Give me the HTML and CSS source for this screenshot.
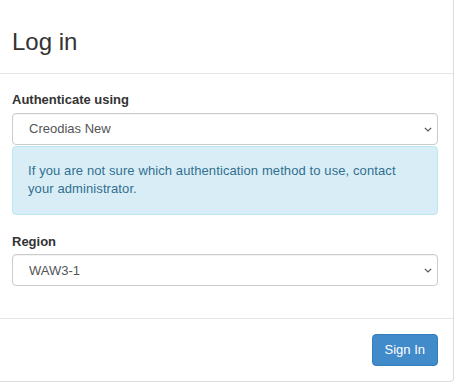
FILE: index.html
```html
<!DOCTYPE html>
<html>
<head>
<meta charset="utf-8">
<link rel="stylesheet" href="styles.css">
</head>
<body>
<div class="panel">
  <div class="panel-header">
    <h3 class="title">Log in</h3>
  </div>
  <div class="panel-body">
    <div class="form-group">
      <label class="label">Authenticate using</label>
      <div class="select-wrap">
        <select class="select"><option>Creodias New</option></select>
        <svg class="chev" width="8" height="5" viewBox="0 0 8 5"><path d="M0.8 0.8 L4 4 L7.2 0.8" fill="none" stroke="#555" stroke-width="1.2"/></svg>
      </div>
      <div class="alert">If you are not sure which authentication method to use, contact your administrator.</div>
    </div>
    <div class="form-group">
      <label class="label">Region</label>
      <div class="select-wrap">
        <select class="select"><option>WAW3-1</option></select>
        <svg class="chev" width="8" height="5" viewBox="0 0 8 5"><path d="M0.8 0.8 L4 4 L7.2 0.8" fill="none" stroke="#555" stroke-width="1.2"/></svg>
      </div>
    </div>
  </div>
  <div class="panel-footer">
    <button class="btn">Sign In</button>
  </div>
</div>
</body>
</html>
```
FILE: styles.css
```css
* { box-sizing: border-box; }
html, body { margin: 0; padding: 0; background: #fff; }
body {
  font-family: "Liberation Sans", Arial, sans-serif;
  font-size: 13px;
  line-height: 1.428571;
  color: #333;
}
.panel {
  width: 454px;
  height: 382px;
  border-right: 1px solid #ddd;
  border-bottom: 1px solid #ddd;
  border-bottom-right-radius: 4px;
  display: flex;
  flex-direction: column;
}
.panel-header {
  height: 74px;
  padding: 29px 15px 0 12px;
  border-bottom: 1px solid #e5e5e5;
}
.title {
  margin: 0;
  font-size: 24px;
  font-weight: 500;
  line-height: 1.1;
  color: #333;
}
.panel-body {
  padding: 17px 15px 0 12px;
  height: 245px;
  border-bottom: 1px solid #e5e5e5;
}
.form-group { margin-bottom: 18px; }
.label {
  display: block;
  font-weight: bold;
  margin-bottom: 3px;
}
.select-wrap { position: relative; }
.select {
  display: block;
  width: 100%;
  height: 32px;
  appearance: none;
  -webkit-appearance: none;
  background: #fff;
  border: 1px solid #ccc;
  border-radius: 4px;
  padding: 0 24px 0 16px;
  font-family: "Liberation Sans", Arial, sans-serif;
  font-size: 13px;
  color: #555;
  box-shadow: inset 0 1px 1px rgba(0,0,0,0.05);
}
.chev {
  position: absolute;
  right: 6px;
  top: 14px;
  pointer-events: none;
}
.alert {
  margin-top: 1px;
  padding: 15px 40px 15px 15px;
  background: #d9edf7;
  border: 1px solid #bce8f1;
  border-radius: 4px;
  color: #31708f;
  letter-spacing: 0.1px;
}
.panel-footer {
  padding: 15px 15px 0 12px;
  display: flex;
  justify-content: flex-end;
}
.btn {
  height: 32px;
  padding: 6px 12px;
  font-family: "Liberation Sans", Arial, sans-serif;
  font-size: 13px;
  line-height: 1.428571;
  color: #fff;
  background: #428bca;
  border: 1px solid #357ebd;
  border-radius: 4px;
}
```
